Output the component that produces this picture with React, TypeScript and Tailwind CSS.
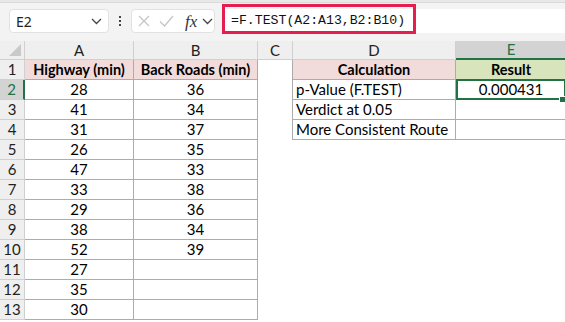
import React from "react";

const GREEN = "#217346";

const dataA = [28, 41, 31, 26, 47, 33, 29, 38, 52, 27, 35, 30];
const dataB = [36, 34, 37, 35, 33, 38, 36, 34, 39];

const cellFont = { fontFamily: "Lato, 'Liberation Sans', sans-serif" };

function Chevron({ className }: { className?: string }) {
  return (
    <svg className={className} width="11" height="7" viewBox="0 0 11 7" fill="none">
      <path d="M1 1l4.5 4.5L10 1" stroke="#444" strokeWidth="1.3" />
    </svg>
  );
}

export default function App() {
  const rows = Array.from({ length: 13 }, (_, i) => i + 1);
  const dRows: Record<number, string> = {
    1: "Calculation",
    2: "p-Value (F.TEST)",
    3: "Verdict at 0.05",
    4: "More Consistent Route",
  };
  const hdr = "flex items-center justify-center text-[15px] text-[#222] bg-[#efefef] border-r border-b border-[#d0d0d0]";
  const tb = "border-[#acacac]";

  return (
    <div className="w-[565px] h-[322px] overflow-hidden bg-white relative" style={cellFont}>
      {/* toolbar */}
      <div className="h-[41px] bg-[#f3f3f3] relative">
        <div className="h-[3px] bg-[#e8e8e8] border-b border-[#dadada]" />
        <div className="flex items-start pt-[6px] pl-[9px]">
          <div className="w-[100px] h-[24px] bg-white rounded-[4px] border border-[#e2e2e2] flex items-center pl-[6px] pr-[6px] justify-between">
            <span className="text-[14px] text-[#222]" style={{ fontFamily: "'Noto Sans', sans-serif" }}>E2</span>
            <Chevron />
          </div>
          <div className="w-[22px] h-[24px] flex flex-col items-center justify-center gap-[2px]">
            <div className="w-[2px] h-[2px] bg-[#444]" />
            <div className="w-[2px] h-[2px] bg-[#444]" />
            <div className="w-[2px] h-[2px] bg-[#444]" />
          </div>
          <div className="w-[84px] h-[24px] bg-white rounded-[4px] border border-[#e2e2e2] flex items-center pl-[6px] gap-[9px]">
            <svg width="12" height="12" viewBox="0 0 12 12">
              <path d="M1 1l10 10M11 1L1 11" stroke="#c4c4c4" strokeWidth="1.2" />
            </svg>
            <svg width="15" height="12" viewBox="0 0 15 12">
              <path d="M1 6.5l4.5 4.5L14 1" stroke="#c4c4c4" strokeWidth="1.2" fill="none" />
            </svg>
            <span className="italic text-[17px] text-[#333] leading-none ml-[2px]" style={{ fontFamily: "'Liberation Serif', serif" }}>fx</span>
            <Chevron className="-ml-[4px]" />
          </div>
          <div className="ml-[7px] flex-1 h-[24px] bg-white flex items-center pl-[9px]">
            <span className="text-[13.2px] text-[#111]" style={{ fontFamily: "'Liberation Mono', monospace" }}>=F.TEST(A2:A13,B2:B10)</span>
          </div>
        </div>
        <div className="absolute left-[222px] top-[4px] w-[194px] h-[30px] border-[3px] border-[#e41e4f]" />
      </div>

      {/* grid */}
      <div
        className="grid"
        style={{ gridTemplateColumns: "25px 109px 124px 35px 163px 111px", gridTemplateRows: "19px repeat(13, 20px)" }}
      >
        <div className={hdr + " relative"}>
          <svg className="absolute right-[3px] bottom-[3px]" width="12" height="12" viewBox="0 0 12 12">
            <path d="M12 0V12H0Z" fill="#c9c9c9" />
          </svg>
        </div>
        <div className={hdr}>A</div>
        <div className={hdr}>B</div>
        <div className={hdr}>C</div>
        <div className={hdr}>D</div>
        <div className="flex items-center justify-center text-[15px] bg-[#d3d3d3] border-b-2 border-b-[#217346] border-r border-r-[#d0d0d0]" style={{ color: GREEN }}>E</div>

        {rows.map((r) => {
          const isHead = r === 1;
          const a = isHead ? "Highway (min)" : dataA[r - 2];
          const b = isHead ? "Back Roads (min)" : dataB[r - 2];
          const headBg = isHead ? "bg-[#f2dcdb] font-bold text-[14.5px]" : "text-[15px]";
          const hasD = r <= 4;
          return (
            <React.Fragment key={r}>
              {r === 2 ? (
                <div className="flex items-center justify-center text-[15px] bg-[#d3d3d3] border-b border-b-[#d0d0d0] border-r-2 border-r-[#217346]" style={{ color: GREEN }}>
                  {r}
                </div>
              ) : (
                <div className={hdr}>{r}</div>
              )}
              <div className={`flex items-center justify-center text-black border-r border-b ${tb} ${headBg}`}>{a}</div>
              <div className={`flex items-center justify-center text-black border-r border-b ${tb} ${headBg}`}>{b ?? ""}</div>
              <div className={hasD ? `border-r ${tb}` : ""} />
              {hasD ? (
                <div className={`flex items-center text-black border-r border-b ${tb} ${isHead ? "justify-center bg-[#f2dcdb] font-bold text-[14.5px]" : "pl-[3px] text-[15px]"}`}>
                  {dRows[r]}
                </div>
              ) : (
                <div />
              )}
              {hasD ? (
                <div className={`relative flex items-center justify-center text-black border-r border-b ${tb} ${isHead ? "bg-[#d8e4bc] font-bold text-[14.5px]" : "text-[15px]"}`}>
                  {r === 1 ? "Result" : r === 2 ? "0.000431" : ""}
                  {r === 2 && (
                    <>
                      <div className="absolute -top-[1px] left-0 right-0 -bottom-[1px] border-2 border-[#217346]" />
                      <div className="absolute right-0 -bottom-[4px] w-[7px] h-[7px] bg-[#217346] border border-white" />
                    </>
                  )}
                </div>
              ) : (
                <div />
              )}
            </React.Fragment>
          );
        })}
      </div>
    </div>
  );
}
